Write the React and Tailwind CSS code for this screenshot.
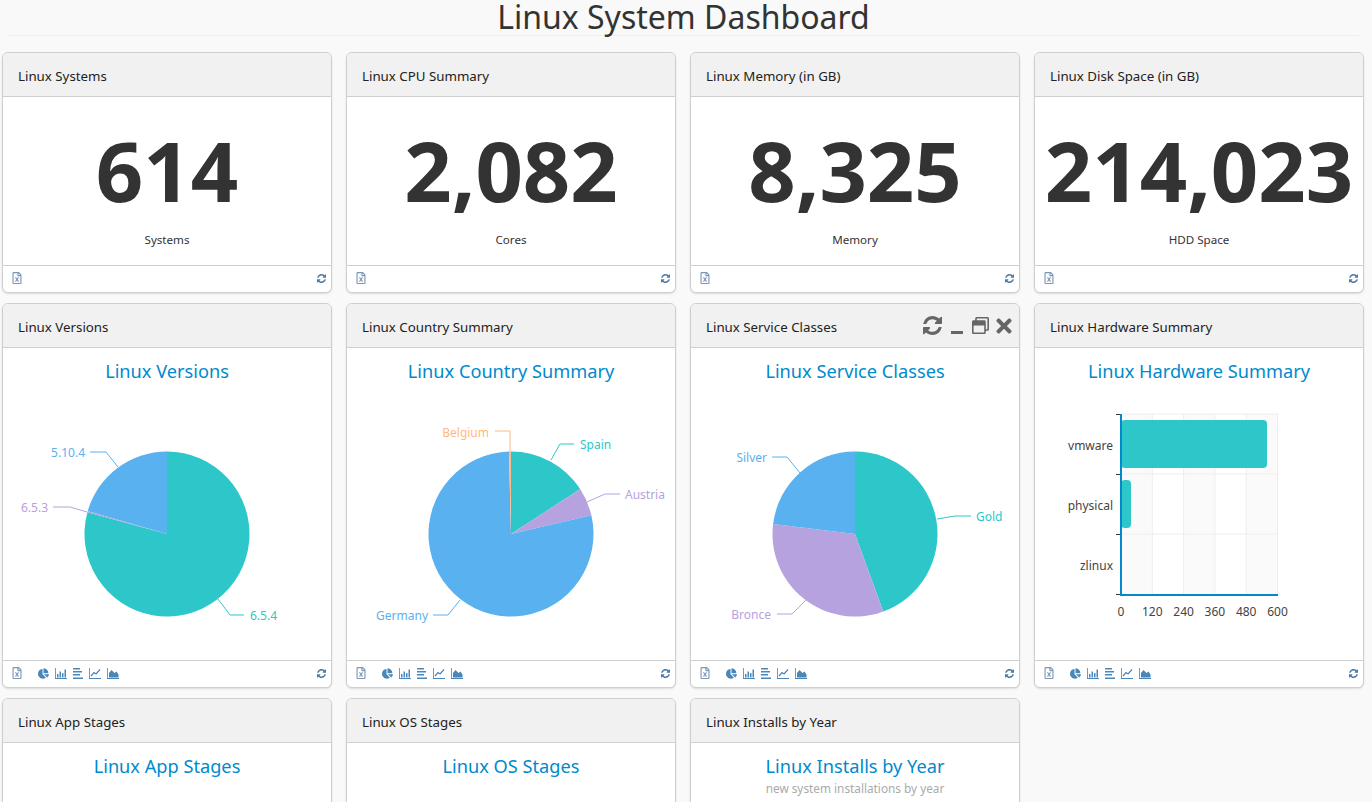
import { FaRegFileExcel, FaChartPie, FaRegWindowRestore, FaTimes } from "react-icons/fa";

const TEAL = "#2ec7c9";
const BLUE = "#5ab1ef";
const PURPLE = "#b6a2de";
const ORANGE = "#ffb980";

const STATS = [
  { title: "Linux Systems", value: "614", caption: "Systems" },
  { title: "Linux CPU Summary", value: "2,082", caption: "Cores" },
  { title: "Linux Memory (in GB)", value: "8,325", caption: "Memory" },
  { title: "Linux Disk Space (in GB)", value: "214,023", caption: "HDD Space" },
];

const PIES = [
  {
    title: "Linux Versions",
    ox: 3,
    cx: 167,
    cy: 534,
    slices: [
      { from: 0, to: 285.2, color: TEAL },
      { from: 285.2, to: 286.2, color: PURPLE },
      { from: 286.2, to: 360, color: BLUE },
    ],
    labels: [
      { text: "5.10.4", color: BLUE, x: 85, y: 452, anchor: "end", line: "118,467 106,452 90,452" },
      { text: "6.5.3", color: PURPLE, x: 48, y: 507, anchor: "end", line: "87,512 70,507 53,507" },
      { text: "6.5.4", color: TEAL, x: 250, y: 615, anchor: "start", line: "218,599 230,615 244,615" },
    ],
  },
  {
    title: "Linux Country Summary",
    ox: 347,
    cx: 511,
    cy: 534,
    slices: [
      { from: 0, to: 57, color: TEAL },
      { from: 57, to: 76.9, color: PURPLE },
      { from: 76.9, to: 358.6, color: BLUE },
      { from: 358.6, to: 360, color: ORANGE },
    ],
    labels: [
      { text: "Spain", color: TEAL, x: 580, y: 444, anchor: "start", line: "551,460 560,444 574,444" },
      { text: "Austria", color: PURPLE, x: 625, y: 494, anchor: "start", line: "587,502 605,494 620,494" },
      { text: "Belgium", color: ORANGE, x: 489, y: 432, anchor: "end", line: "510,452 510,431 495,431" },
      { text: "Germany", color: BLUE, x: 428, y: 615, anchor: "end", line: "460,600 448,615 433,615" },
    ],
  },
  {
    title: "Linux Service Classes",
    ox: 691,
    cx: 855,
    cy: 534,
    controls: true,
    slices: [
      { from: 0, to: 160, color: TEAL },
      { from: 160, to: 277, color: PURPLE },
      { from: 277, to: 360, color: BLUE },
    ],
    labels: [
      { text: "Silver", color: BLUE, x: 767, y: 457, anchor: "end", line: "800,473 787,457 772,457" },
      { text: "Gold", color: TEAL, x: 976, y: 516, anchor: "start", line: "937,519 955,516 971,516" },
      { text: "Bronce", color: PURPLE, x: 771, y: 614, anchor: "end", line: "806,600 792,614 777,614" },
    ],
  },
];

const HARDWARE = [
  { label: "vmware", y: 420, w: 146 },
  { label: "physical", y: 480, w: 10 },
  { label: "zlinux", y: 540, w: 1 },
];

const BOTTOM = [
  { title: "Linux App Stages" },
  { title: "Linux OS Stages" },
  { title: "Linux Installs by Year", sub: "new system installations by year" },
];

function slicePath(cx, cy, r, from, to) {
  const pt = (deg) => {
    const a = (deg * Math.PI) / 180;
    return `${cx + r * Math.sin(a)} ${cy - r * Math.cos(a)}`;
  };
  const large = to - from > 180 ? 1 : 0;
  return `M${cx} ${cy} L${pt(from)} A${r} ${r} 0 ${large} 1 ${pt(to)} Z`;
}

// old Font Awesome 4 refresh glyph, the FA5 one in react-icons has a different shape
function RefreshIcon({ size }) {
  return (
    <svg width={size} height={size} viewBox="128 128 1536 1536" fill="currentColor">
      <path d="M1639 1056q0 5-1 7-64 268-268 434.500t-478 166.500q-146 0-282.500-55t-243.500-157l-129 129q-19 19-45 19t-45-19-19-45v-448q0-26 19-45t45-19h448q26 0 45 19t19 45-19 45l-137 137q71 66 161 102t187 36q134 0 250-65t186-179q11-17 53-117 8-23 30-23h192q13 0 22.500 9.500t9.500 22.500zm25-800v448q0 26-19 45t-45 19h-448q-26 0-45-19t-19-45 19-45l138-138q-148-137-349-137-134 0-250 65t-186 179q-11 17-53 117-8 23-30 23h-199q-13 0-22.500-9.500t-9.500-22.500v-7q65-268 270-434.500t480-166.500q146 0 284 55.500t245 156.500l130-129q19-19 45-19t45 19 19 45z" />
    </svg>
  );
}

function BarsIcon() {
  return (
    <svg width="12" height="11" viewBox="0 0 12 11" fill="currentColor">
      <path d="M0 0h.8v10H12v1H0z" />
      <path d="M2 6h1.500v3.500H2zM4.500 3.500H6v6H4.500zM7 5h1.500v4.500H7zM9.500 1.500H11v8H9.500z" />
    </svg>
  );
}

function RowsIcon() {
  return (
    <svg width="10" height="11" viewBox="0 0 10 11" fill="currentColor">
      <path d="M0 0h7v1.500H0zM0 3h9v1.500H0zM0 6h7v1.500H0zM0 9.500h10V11H0z" />
    </svg>
  );
}

function LineIcon() {
  return (
    <svg width="12" height="11" viewBox="0 0 12 11" fill="currentColor">
      <path d="M0 0h.8v10H12v1H0z" />
      <path d="M2 8l3-3.500 2 1.500 4-4.500" fill="none" stroke="currentColor" strokeWidth="1.200" />
    </svg>
  );
}

function AreaIcon() {
  return (
    <svg width="12" height="11" viewBox="0 0 12 11" fill="currentColor">
      <path d="M0 0h.8v10H12v1H0z" />
      <path d="M2 9.500V5l2.500-3 3 3 2-1.500L11.500 6.500v3z" />
    </svg>
  );
}

function Card({ title, controls, chartIcons, bodyClass, children }) {
  return (
    <div className="flex flex-col overflow-hidden rounded-[6px] border border-[#cfcfcf] bg-white shadow-[0_1px_2px_rgba(0,0,0,0.12)]">
      <div className="flex h-[44px] items-center border-b border-[#cfcfcf] bg-[#f1f1f1] pl-[15px] pr-[4px] text-[13.3px] text-[#222]">
        <span className="pt-[4px]">{title}</span>
        {controls && (
          <div className="ml-auto flex items-center text-[#666]">
            <RefreshIcon size={19} />
            <span className="ml-[9px] mt-[13px] h-[3px] w-[12px] bg-[#666]" />
            <FaRegWindowRestore size={17} className="ml-[9px]" />
            <FaTimes size={22} className="ml-[4px]" />
          </div>
        )}
      </div>
      <div className={bodyClass}>{children}</div>
      <div className="flex h-[27px] items-center border-t border-[#cfcfcf] pb-[2px] pl-[8px] pr-[5px] text-[#4a86b8]">
        <FaRegFileExcel size={12} className="text-[#7c97b8]" />
        {chartIcons && (
          <div className="ml-[15px] flex items-center gap-[6px]">
            <FaChartPie size={11} />
            <BarsIcon />
            <RowsIcon />
            <LineIcon />
            <AreaIcon />
          </div>
        )}
        <span className="ml-auto text-[#4b7aa8]">
          <RefreshIcon size={9} />
        </span>
      </div>
    </div>
  );
}

function StatCard({ title, value, caption }) {
  return (
    <Card title={title} bodyClass="flex h-[168px] flex-col items-center pt-[20px]">
      <div className="font-['Open_Sans',sans-serif] text-[83px] font-bold leading-[106px] text-[#333]">
        {value}
      </div>
      <div className="mt-[9px] text-[11.6px] leading-[16px] text-[#333]">{caption}</div>
    </Card>
  );
}

function ChartTitle({ children }) {
  return (
    <div className="pb-[9px] pt-[11px] text-center text-[18.2px] leading-[24px] text-[#008acd]">
      {children}
    </div>
  );
}

function PieCard({ title, ox, cx, cy, slices, labels, controls }) {
  return (
    <Card title={title} controls={controls} chartIcons bodyClass="h-[312px]">
      <ChartTitle>{title}</ChartTitle>
      <svg width="328" height="268" className="block overflow-visible">
        <g transform={`translate(${-ox} -392)`} fontSize="12">
          {slices.map((s) => (
            <path key={s.from} d={slicePath(cx, cy, 82.5, s.from, s.to)} fill={s.color} />
          ))}
          {labels.map((l) => (
            <g key={l.text}>
              <polyline points={l.line} fill="none" stroke={l.color} />
              <text x={l.x} y={l.y + 5} fill={l.color} textAnchor={l.anchor}>
                {l.text}
              </text>
            </g>
          ))}
        </g>
      </svg>
    </Card>
  );
}

function HardwareCard() {
  const ticks = [0, 120, 240, 360, 480, 600];
  return (
    <Card title="Linux Hardware Summary" chartIcons bodyClass="h-[312px]">
      <ChartTitle>Linux Hardware Summary</ChartTitle>
      <svg width="328" height="268" className="block">
        <g transform="translate(-1035 -392)" fontSize="12" fill="#333">
          {[0, 2, 4].map((i) => (
            <rect key={i} x={1121 + i * 31.3} y="414" width="31.3" height="181" fill="#fafafa" />
          ))}
          {ticks.map((t, i) => (
            <g key={t}>
              <line x1={1121 + i * 31.3} x2={1121 + i * 31.3} y1="414" y2="595" stroke="#eee" />
              <text x={1121 + i * 31.3} y="616" textAnchor="middle" fill="#444">
                {t}
              </text>
            </g>
          ))}
          {[414, 474, 534].map((y) => (
            <line key={y} x1="1121" x2="1278" y1={y} y2={y} stroke="#eee" />
          ))}
          {HARDWARE.map((b) => (
            <g key={b.label}>
              <rect x="1121" y={b.y} width={b.w} height="48" rx={b.w > 5 ? 4 : 0} fill={TEAL} />
              <text x="1113" y={b.y + 30} textAnchor="end" fill="#444">
                {b.label}
              </text>
            </g>
          ))}
          {[414, 474, 534, 594].map((y) => (
            <line key={y} x1="1116" x2="1121" y1={y + 0.5} y2={y + 0.5} stroke="#333" />
          ))}
          <path d="M1121 414V595H1278" fill="none" stroke="#008acd" strokeWidth="2" />
        </g>
      </svg>
    </Card>
  );
}

export default function App() {
  return (
    <div className="h-[802px] overflow-hidden bg-[#f9f9f9] pl-[2px] font-['Noto_Sans',sans-serif]">
      <h1 className="ml-[6px] mr-[13px] mb-[16px] h-[36px] border-b border-[#eee] text-center text-[32px] leading-[34px] text-[#333]">
        Linux System Dashboard
      </h1>
      <div className="grid grid-cols-[repeat(4,330px)] gap-x-[14px] gap-y-[10px]">
        {STATS.map((s) => (
          <StatCard key={s.title} {...s} />
        ))}
        {PIES.map((p) => (
          <PieCard key={p.title} {...p} />
        ))}
        <HardwareCard />
        {BOTTOM.map((b) => (
          <Card key={b.title} title={b.title} chartIcons bodyClass="h-[312px]">
            <div className="pt-[11px] text-center text-[18.2px] leading-[24px] text-[#008acd]">
              {b.title}
            </div>
            {b.sub && <div className="text-center text-[11.8px] leading-[20px] text-[#aaa]">{b.sub}</div>}
          </Card>
        ))}
      </div>
    </div>
  );
}
